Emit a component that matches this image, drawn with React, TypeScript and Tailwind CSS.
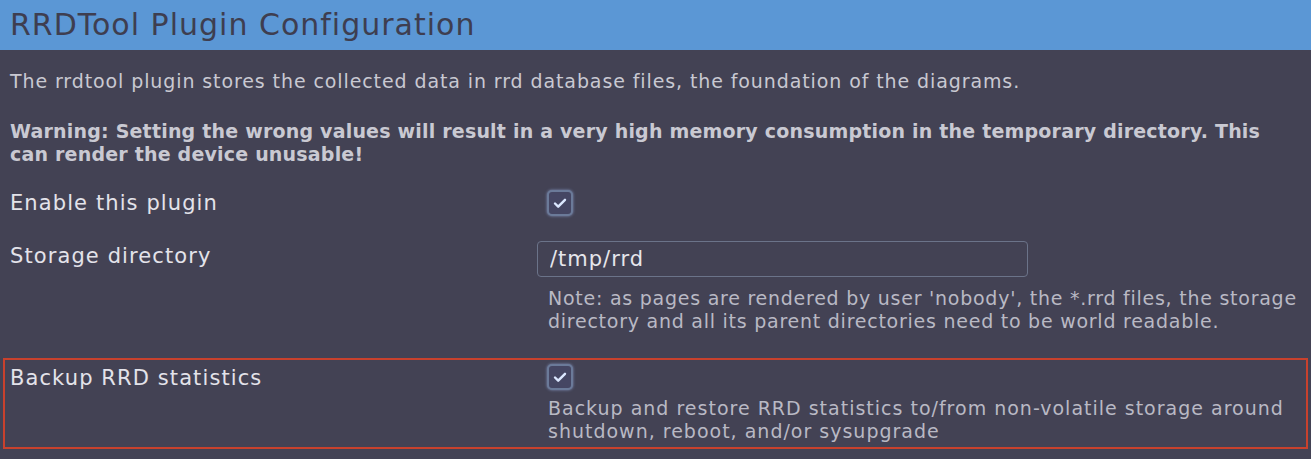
import { FC } from "react";

const Check: FC = () => (
  <span className="flex h-[26px] w-[26px] items-center justify-center rounded-[5px] border-2 border-[#6b7a99] bg-[#454663] shadow-[0_0_3px_#7f8fb8]">
    <svg width="16" height="16" viewBox="0 0 16 16" fill="none">
      <path
        d="M3 8.5l3.2 3.2L13 4.8"
        stroke="#dbe7ff"
        strokeWidth="2.4"
        strokeLinecap="round"
        strokeLinejoin="round"
      />
    </svg>
  </span>
);

const App: FC = () => {
  return (
    <div className="h-[459px] w-[1311px] overflow-hidden bg-[#434254] font-['DejaVu_Sans',sans-serif] text-[#e3e3ea]">
      {/* Header */}
      <div className="flex h-[50px] items-center bg-[#5b97d5] px-[10px]">
        <h2 className="text-[30px] leading-none tracking-[1px] text-[#3e3e50]">
          RRDTool Plugin Configuration
        </h2>
      </div>

      <div className="px-[10px]">
        <p className="mt-[20px] text-[19px] leading-[23px] tracking-[0.9px] text-[#c9c9d2]">
          The rrdtool plugin stores the collected data in rrd database files,
          the foundation of the diagrams.
        </p>
        <p className="mt-[27px] text-[19px] font-bold leading-[23px] tracking-[0.2px] text-[#c9c9d2]">
          Warning: Setting the wrong values will result in a very high memory
          consumption in the temporary directory. This
          <br />
          can render the device unusable!
        </p>

        {/* Enable row */}
        <div className="mt-[24px] flex">
          <label className="w-[527px] shrink-0 text-[21px] leading-[26px] tracking-[1.1px]">
            Enable this plugin
          </label>
          <div className="pl-[10px]">
            <Check />
          </div>
        </div>

        {/* Storage row */}
        <div className="mt-[25px] flex">
          <label className="w-[527px] shrink-0 pt-[2px] text-[21px] leading-[26px] tracking-[1.1px]">
            Storage directory
          </label>
          <div>
            <input
              readOnly
              value="/tmp/rrd"
              className="h-[36px] w-[491px] rounded-[4px] border border-[#6b7389] bg-transparent px-[12px] text-[21px] tracking-[1px] text-[#e6e6ec] outline-none"
            />
            <p className="mt-[10px] whitespace-nowrap pl-[11px] text-[19px] leading-[23px] tracking-[0.75px] text-[#b9b9c4]">
              Note: as pages are rendered by user 'nobody', the *.rrd files, the
              storage
              <br />
              directory and all its parent directories need to be world readable.
            </p>
          </div>
        </div>
      </div>

      {/* Highlighted row */}
      <div className="mx-[3px] mt-[25px] flex h-[91px] border-2 border-[#c8412d] px-[5px] pt-[4px]">
        <label className="w-[527px] shrink-0 pt-[1px] text-[21px] leading-[26px] tracking-[1.1px]">
          Backup RRD statistics
        </label>
        <div>
          <div className="pl-[10px]">
            <Check />
          </div>
          <p className="mt-[7px] whitespace-nowrap pl-[11px] text-[19px] leading-[23px] tracking-[1px] text-[#b9b9c4]">
            Backup and restore RRD statistics to/from non-volatile storage around
            <br />
            shutdown, reboot, and/or sysupgrade
          </p>
        </div>
      </div>
    </div>
  );
};

export default App;
